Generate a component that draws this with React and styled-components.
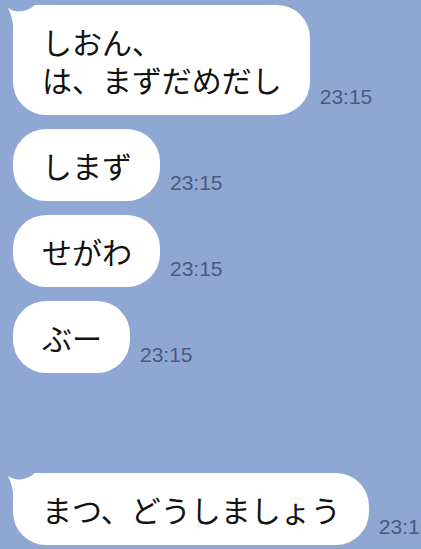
import React from "react";
import styled, { createGlobalStyle } from "styled-components";

const Global = createGlobalStyle`
  html, body {
    margin: 0;
    padding: 0;
    background: #8ea8d3;
    overflow: hidden;
  }
  body {
    width: 421px;
    height: 549px;
  }
`;

const Chat = styled.div`
  width: 421px;
  height: 549px;
  box-sizing: border-box;
  padding: 5px 0 0 13px;
  background: #8ea8d3;
  display: flex;
  flex-direction: column;
  overflow: hidden;
`;

const Row = styled.div`
  display: flex;
  align-items: flex-end;
  gap: 10px;
  margin-top: ${(p) => p.$gap}px;
  white-space: nowrap;
`;

const Bubble = styled.div`
  position: relative;
  flex-shrink: 0;
  background: #ffffff;
  color: #121212;
  border-radius: 33px;
  padding: 17px 28px 17px 29px;
  font-family: "Noto Sans CJK JP", "Noto Sans", sans-serif;
  font-size: 30px;
  line-height: 38px;
`;

const Line = styled.div`
  position: relative;
  height: 38px;
`;

const Tail = styled.svg`
  position: absolute;
  left: -6px;
  top: 0;
  width: 40px;
  height: 36px;
  overflow: visible;
`;

const Time = styled.span`
  flex-shrink: 0;
  font-family: "Liberation Sans", Arial, sans-serif;
  font-size: 21px;
  line-height: 21px;
  color: #4a5a80;
  padding-bottom: 8px;
`;

const TailShape = () => (
  <Tail viewBox="0 0 40 36">
    <path
      d="M1 3 C 10 9, 20 7, 28 0 L 40 0 L 40 36 L 6 36 L 6 28 C 7 20, 5 11, 1 3 Z"
      fill="#ffffff"
    />
  </Tail>
);

const messages = [
  { lines: ["しおん、", "は、まずだめだし"], tail: true, gap: 0 },
  { lines: ["しまず"], gap: 14 },
  { lines: ["せがわ"], gap: 14 },
  { lines: ["ぶー"], gap: 14 },
  { lines: ["まつ、どうしましょう"], tail: true, gap: 100 },
];

export default function App() {
  return (
    <>
      <Global />
      <Chat>
        {messages.map((m, i) => (
          <Row key={i} $gap={m.gap}>
            <Bubble>
              {m.tail && <TailShape />}
              {m.lines.map((l, j) => (
                <Line key={j}>{l}</Line>
              ))}
            </Bubble>
            <Time>23:15</Time>
          </Row>
        ))}
      </Chat>
    </>
  );
}
